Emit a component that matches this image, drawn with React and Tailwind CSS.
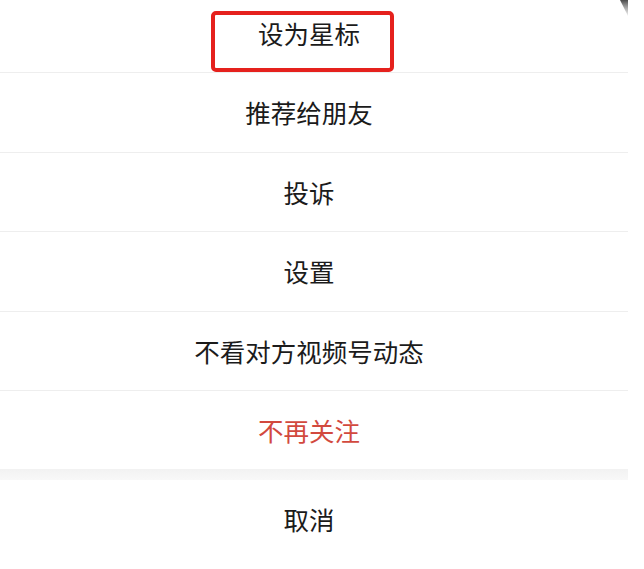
import React from 'react';

const items = [
    {label: '推荐给朋友', h: 'h-[79px]'},
    {label: '投诉', h: 'h-[78px]'},
    {label: '设置', h: 'h-[79px]'},
    {label: '不看对方视频号动态', h: 'h-[78px]'},
];

const font = {fontFamily: '"Noto Sans CJK SC", "Noto Sans", sans-serif'};

export default function App() {
    return (
        <div className="relative w-[644px] h-[569px] bg-white overflow-hidden" style={font}>
            {/* corner of the window behind */}
            <svg className="absolute left-[617px] top-0" width="12" height="17" viewBox="0 0 12 17">
                <defs>
                    <linearGradient id="g" x1="0" y1="0" x2="0" y2="1">
                        <stop offset="0" stopColor="#4a4a4a"/>
                        <stop offset="1" stopColor="#9a9a9a" stopOpacity="0.2"/>
                    </linearGradient>
                </defs>
                <path d="M3 0 L11 0 L11 16 Q7 8 3 0 Z" fill="url(#g)"/>
            </svg>

            {/* Action sheet */}
            <div className="flex flex-col w-[628px] text-[25.5px] text-[#1b1b1b]">
                <div className="h-[67px] flex items-center justify-center pr-[10px] pb-[5px] border-b border-[#eeeeee] box-content">
                    设为星标
                </div>
                {items.map((it) => (
                    <div key={it.label}
                         className={`${it.h} flex items-center justify-center pr-[10px] border-b border-[#eeeeee] box-content`}>
                        {it.label}
                    </div>
                ))}
                <div className="h-[78px] flex items-center justify-center pr-[10px] text-[#d2493e]">
                    不再关注
                </div>
                <div className="h-[11px] bg-gradient-to-b from-[#f2f2f2] to-[#f8f8f8]"/>
                <div className="h-[78px] flex items-center justify-center pr-[10px] pb-[11px] box-content">
                    取消
                </div>
            </div>

            {/* highlight box */}
            <div className="absolute left-[211px] top-[11px] w-[183px] h-[61px] border-4 border-[#e5211d] rounded-[5px]"/>
        </div>
    );
}
